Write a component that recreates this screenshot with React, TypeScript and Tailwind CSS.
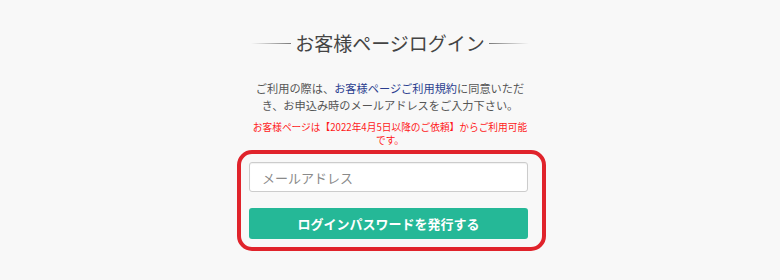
import React from "react";

export default function App() {
  const jp = { fontFamily: '"Noto Sans CJK JP", "Noto Sans", sans-serif' };
  return (
    <div
      className="w-full h-[280px] bg-[#f8f8f8] flex flex-col items-center overflow-hidden"
      style={jp}
    >
      <div className="mt-[29px] flex items-center gap-1">
        <div className="w-[40px] h-px bg-linear-to-r from-transparent to-[#7a7a7a]" />
        <h1 className="text-[19px] leading-[28px] text-[#444] font-normal">
          お客様ページログイン
        </h1>
        <div className="w-[40px] h-px bg-linear-to-r from-[#7a7a7a] to-transparent" />
      </div>

      <p className="mt-[23px] w-[300px] text-center text-[11.2px] leading-[17px] text-[#555]">
        ご利用の際は、<span className="text-[#2a3d8f]">お客様ページご利用規約</span>に同意いただ
        <br />
        き、お申込み時のメールアドレスをご入力下さい。
      </p>

      <p className="mt-[7px] w-[320px] text-center text-[9.7px] leading-[13px] text-[#ff1a1a]">
        お客様ページは【2022年4月5日以降のご依頼】からご利用可能
        <br />
        です。
      </p>

      <div className="mt-[3px] ml-[3px] border-[4px] border-[#e0232b] rounded-[15px] pt-2 pb-2 pl-2 pr-[14px]">
        <input
          type="text"
          placeholder="メールアドレス"
          className="block w-[279px] h-[30px] bg-white border border-[#cccccc] rounded-[3px] pl-3 text-[13px] text-[#555] placeholder:text-[#8a8a8a] shadow-[inset_0_1px_1px_rgba(0,0,0,0.06)] outline-none"
          style={jp}
        />
        <button
          type="button"
          className="mt-4 block w-[279px] h-[31px] bg-[#25b897] rounded-[3px] text-white text-[13px] font-bold"
          style={jp}
        >
          ログインパスワードを発行する
        </button>
      </div>
    </div>
  );
}
